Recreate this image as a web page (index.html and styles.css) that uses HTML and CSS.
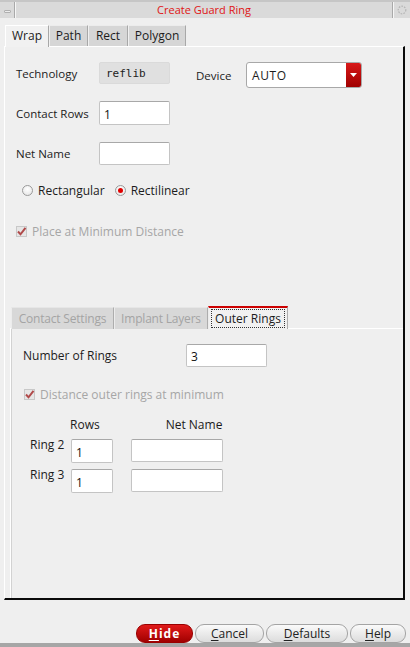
FILE: index.html
```html
<!DOCTYPE html>
<html>
<head>
<meta charset="utf-8">
<title>Create Guard Ring</title>
<link rel="stylesheet" href="styles.css">
</head>
<body>
<div class="window">
  <div class="titlebar">
    <div class="tb-btn tb-left"><span class="dash"></span></div>
    <div class="tb-title">Create Guard Ring</div>
    <div class="tb-btn tb-right">
      <svg width="10" height="10" viewBox="0 0 10 10"><circle cx="5" cy="5" r="3.8" fill="none" stroke="#b4b4b4" stroke-width="1.2" stroke-dasharray="1.6 1.2"/></svg>
    </div>
  </div>

  <div class="tabs">
    <div class="tab active w-wrap">Wrap</div>
    <div class="tab w-path">Path</div>
    <div class="tab w-rect">Rect</div>
    <div class="tab w-poly">Polygon</div>
  </div>

  <div class="panel">
    <div class="row row-tech">
      <div class="grp grp-tech">
        <span class="label lw83">Technology</span>
        <div class="field readonly">reflib</div>
      </div>
      <div class="grp grp-dev">
        <span class="label lw50">Device</span>
        <div class="combo">
          <span class="combo-text">AUTO</span>
          <span class="combo-btn"><svg width="7" height="4" viewBox="0 0 7 4"><path d="M0 0 H7 L3.5 4 Z" fill="#fff"/></svg></span>
        </div>
      </div>
    </div>

    <div class="row row-rows">
      <span class="label lw83">Contact Rows</span>
      <div class="field f71 h24">1</div>
    </div>

    <div class="row row-net">
      <span class="label lw83">Net Name</span>
      <div class="field f71 h23"></div>
    </div>

    <div class="row row-radio">
      <span class="radio"></span><span class="rlabel">Rectangular</span>
      <span class="radio on"></span><span class="rlabel">Rectilinear</span>
    </div>

    <div class="row row-check">
      <span class="check"><svg width="11" height="11" viewBox="0 0 11 11"><path d="M2 5.5 L4.5 8.3 L9.5 1.8" fill="none" stroke="#b04a4a" stroke-width="2"/></svg></span>
      <span class="disabled">Place at Minimum Distance</span>
    </div>

    <div class="subtabs">
      <div class="stab s1">Contact Settings</div>
      <div class="stab s2">Implant Layers</div>
      <div class="stab s3 active"><span class="focus">Outer Rings</span></div>
    </div>

    <div class="subpanel">
      <div class="row row-num">
        <span class="label lw163">Number of Rings</span>
        <div class="field f81 h23">3</div>
      </div>

      <div class="row row-check2">
        <span class="check"><svg width="11" height="11" viewBox="0 0 11 11"><path d="M2 5.5 L4.5 8.3 L9.5 1.8" fill="none" stroke="#b04a4a" stroke-width="2"/></svg></span>
        <span class="disabled">Distance outer rings at minimum</span>
      </div>

      <div class="row row-head">
        <span class="hd-rows">Rows</span>
        <span class="hd-net">Net Name</span>
      </div>

      <div class="ring ring2">
        <span class="ring-label">Ring 2</span>
        <div class="field f42 h24">1</div>
        <div class="field f92 h23"></div>
      </div>
      <div class="ring ring3">
        <span class="ring-label">Ring 3</span>
        <div class="field f42 h24">1</div>
        <div class="field f92 h23"></div>
      </div>
    </div>
  </div>

  <div class="buttons">
    <div class="btn hide"><u>H</u>ide</div>
    <div class="btn cancel"><u>C</u>ancel</div>
    <div class="btn defaults"><u>D</u>efaults</div>
    <div class="btn help"><u>H</u>elp</div>
  </div>
  <div class="statusbar"></div>
</div>
</body>
</html>
```

FILE: styles.css
```css
* { box-sizing: border-box; }
html, body { margin: 0; padding: 0; }
body {
  width: 410px;
  height: 647px;
  overflow: hidden;
  background: #efefef;
  font-family: "Open Sans", "Noto Sans", "DejaVu Sans", sans-serif;
  font-size: 11.5px;
  color: #1c1c1c;
}
.window { display: flex; flex-direction: column; height: 647px; }

/* title bar */
.titlebar {
  display: flex;
  height: 18px;
  border-top: 2px solid #c6c6c6;
  background: #dadada;
}
.tb-btn { display: flex; align-items: center; justify-content: center; }
.tb-left { width: 15px; border-right: 1px solid #a9a9a9; }
.dash {
  width: 7px; height: 3px;
  background: #ececec;
  border: 1px solid #b0b0b0;
  border-radius: 1px;
  margin-top: 2px;
}
.tb-title {
  flex: 1;
  text-align: center;
  color: #e01414;
  font-size: 11px;
  line-height: 15px;
  border-left: 1px solid #f6f6f6;
  border-right: 1px solid #a9a9a9;
}
.tb-right { width: 17px; border-left: 1px solid #f6f6f6; }

/* main tabs */
.tabs { display: flex; margin-top: 7px; padding-left: 5px; height: 21px; position: relative; z-index: 1; }
.tab {
  height: 21px;
  font-size: 12px;
  line-height: 20px;
  text-align: center;
  background: #d6d6d6;
  border-top: 1px solid #ececec;
  border-left: 1px solid #f0f0f0;
  border-right: 1px solid #a8a8a8;
  color: #1c1c1c;
}
.tab.active { background: #f1f1f1; border-top-color: #fff; border-left-color: #fff; height: 22px; }
.w-wrap { width: 44px; }
.w-path { width: 39px; }
.w-rect { width: 40px; }
.w-poly { width: 58px; }

/* panel */
.panel {
  margin-left: 4px;
  width: 401px;
  height: 554px;
  border-top: 1px solid #fff;
  border-left: 1px solid #fff;
  border-right: 2px solid #0a0a0a;
  border-bottom: 2px solid #0a0a0a;
  display: flex;
  flex-direction: column;
}
.row { display: flex; align-items: center; }
.label { flex: none; }
.lw83 { width: 83px; }
.lw50 { width: 50px; }
.lw163 { width: 163px; }

.row-tech { margin-top: 15px; padding-left: 11px; align-items: flex-start; height: 26px; }
.grp { display: flex; align-items: center; }
.grp-tech { height: 22px; }
.grp-dev { height: 26px; margin-left: 26px; }

.field {
  background: #fff;
  border: 1px solid #c4c4c4;
  border-top-color: #a8a8a8;
  border-radius: 2px;
  padding-left: 4px;
  display: flex;
  align-items: center;
  font-size: 12px;
  padding-top: 2px;
  color: #111;
}
.field.readonly {
  width: 71px; height: 22px;
  background: #e0e0e0;
  border-color: #dadada;
  font-family: "DejaVu Sans Mono", "Liberation Mono", monospace;
  font-size: 11px;
  padding-left: 6px;
  padding-top: 0;
  color: #222;
}
.f71 { width: 71px; }
.f81 { width: 81px; }
.f42 { width: 42px; }
.f92 { width: 92px; }
.h23 { height: 23px; }
.h24 { height: 24px; }

.combo {
  width: 116px; height: 26px;
  display: flex;
  background: #fff;
  border: 1px solid #a8a8a8;
  border-radius: 3px;
  overflow: hidden;
}
.combo-text { flex: 1; padding-left: 5px; display: flex; align-items: center; font-size: 12px; letter-spacing: 0.6px; padding-top: 1px; }
.combo-btn {
  width: 15px;
  background: linear-gradient(#d81818, #a00000);
  display: flex; align-items: center; justify-content: center;
}

.row-rows { margin-top: 13px; padding-left: 11px; }
.row-net { margin-top: 17px; padding-left: 11px; }

.row-radio { margin-top: 18px; padding-left: 17px; height: 15px; font-size: 12px; }
.radio {
  width: 11px; height: 11px;
  border-radius: 50%;
  border: 1px solid #9a9a9a;
  background: radial-gradient(circle at 50% 35%, #ffffff, #e2e2e2);
  margin-right: 5px;
  display: flex; align-items: center; justify-content: center;
}
.radio.on { margin-left: 10px; }
.radio.on::after {
  content: "";
  width: 5px; height: 5px; border-radius: 50%;
  background: #e00000;
}
.rlabel { color: #1c1c1c; }

.row-check { margin-top: 26px; padding-left: 11px; height: 14px; font-size: 12px; }
.check {
  width: 11px; height: 11px;
  border: 1px solid #c8c8c8;
  background: #e6e6e6;
  margin-right: 5px;
  display: flex;
  position: relative;
}
.check svg { position: absolute; left: -1px; top: -1px; }
.disabled { color: #a6a6a6; }

/* sub tabs */
.subtabs { display: flex; margin-top: 68px; padding-left: 6px; height: 22px; position: relative; z-index: 1; }
.stab {
  height: 22px;
  font-size: 12px;
  line-height: 21px;
  text-align: center;
  background: #d8d8d8;
  color: #a4a4a4;
  border-top: 1px solid #e6e6e6;
  border-left: 1px solid #ececec;
  border-right: 1px solid #adadad;
  margin-top: 1px;
  letter-spacing: -0.2px;
}
.s1 { width: 103px; }
.s2 { width: 94px; }
.s3 { width: 80px; }
.stab.active {
  background: #f1f1f1;
  color: #1c1c1c;
  border-top: 2px solid #cc0000;
  margin-top: 0;
  height: 23px;
  padding: 1px 2px 0;
  line-height: 17px;
  letter-spacing: 0;
}
.focus { display: block; border: 1px dotted #333; }

.subpanel {
  flex: 1;
  margin-left: 5px;
  border-top: 1px solid #fff;
  border-left: 1px solid #fff;
  box-shadow: inset 1px 0 0 #d2d2d2;
  display: flex;
  flex-direction: column;
  font-size: 12px;
}
.row-num { margin-top: 15px; padding-left: 12px; }
.row-check2 { margin-top: 20px; padding-left: 13px; height: 14px; }
.row-head { margin-top: 16px; height: 14px; padding-left: 59px; }
.hd-net { margin-left: 66px; }

.ring { display: flex; align-items: flex-start; padding-left: 19px; }
.ring2 { margin-top: 8px; }
.ring3 { margin-top: 6px; }
.ring-label { width: 41px; margin-top: -3px; }
.ring .f42 { margin-right: 18px; }

/* bottom buttons */
.buttons {
  display: flex;
  justify-content: flex-end;
  gap: 2px;
  padding-top: 24px;
  padding-right: 4px;
  height: 43px;
}
.btn {
  height: 19px;
  border-radius: 9px;
  border: 1px solid #a4a4a4;
  background: linear-gradient(#fafafa, #dcdcdc);
  font-size: 12px;
  line-height: 17px;
  text-align: center;
  color: #222;
}
.btn u { text-underline-offset: 2px; }
.hide {
  width: 57px;
  background: linear-gradient(#e01a1a, #a00000);
  border-color: #900;
  color: #fff;
  font-weight: bold;
  letter-spacing: 1px;
}
.cancel { width: 69px; }
.defaults { width: 82px; }
.help { width: 56px; }
.statusbar { height: 4px; background: #a6a6a6; }
```
